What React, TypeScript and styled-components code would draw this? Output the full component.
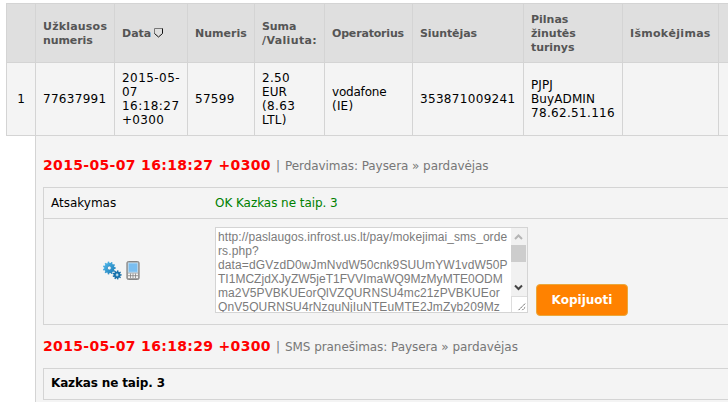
import React from 'react';
import styled, { createGlobalStyle } from 'styled-components';

const LINE = '#d4d4d4';
const SURFACE = '#f4f4f4';

const GlobalStyle = createGlobalStyle`
  * { box-sizing: border-box; }
  body {
    margin: 0;
    background: #fff;
    color: #000;
    font: 12px/14px Verdana, 'DejaVu Sans', sans-serif;
    overflow: hidden;
  }
`;

const Page = styled.main`
  width: 728px;
  height: 402px;
  padding: 3px 0 0 6px;
  overflow: hidden;
`;

const Grid = styled.div`
  display: grid;
  grid-template-columns: 29px 79px 73px 67px 70px 88px 111px 99px 96px 1fr;
  grid-template-rows: 59px 73px;
  border-top: 1px solid ${LINE};
`;

const Cell = styled.div<{ $head?: boolean; $center?: boolean }>`
  display: flex;
  flex-direction: column;
  justify-content: center;
  align-items: ${p => (p.$center ? 'center' : 'flex-start')};
  padding: ${p => (p.$head ? 2 : 0)}px 0 0 ${p => (p.$center ? 0 : 7)}px;
  border-left: 1px solid ${LINE};
  border-bottom: 1px solid ${LINE};
  background: ${p => (p.$head ? '#dfdfdf' : SURFACE)};
  color: ${p => (p.$head ? '#555' : '#000')};
  font-size: ${p => (p.$head ? 11 : 12)}px;
  font-weight: ${p => (p.$head ? 700 : 400)};
`;

const Line = styled.span<{ $track?: number }>`
  display: flex;
  align-items: center;
  gap: 3px;
  height: 14px;
  white-space: pre;
  letter-spacing: ${p => p.$track ?? 0}px;
`;

const SortMark = styled.svg`
  display: block;
  width: 10px;
  height: 10px;
  margin-bottom: 2px;
`;

const Details = styled.section`
  height: 268px;
  margin-left: 29px;
  padding-left: 7px;
  border-left: 1px solid ${LINE};
  background: ${SURFACE};
`;

const Heading = styled.header<{ $height: number; $top: number }>`
  display: flex;
  align-items: baseline;
  height: ${p => p.$height}px;
  padding-top: ${p => p.$top}px;
  color: #777;
  line-height: 18px;
  white-space: pre;
`;

const Stamp = styled.strong`
  width: 233px;
  color: #f00;
  font-size: 14px;
  letter-spacing: 0.33px;
`;

const Bar = styled.span`
  width: 9px;
`;

const Caption = styled.span`
  letter-spacing: -0.065px;
`;

const Box = styled.div`
  border: solid ${LINE};
  border-width: 1px 0 1px 1px;
`;

const AnswerRow = styled.div`
  display: grid;
  grid-template-columns: 164px 1fr;
  align-items: center;
  height: 31px;
  padding: 0 0 1px 7px;
  border-bottom: 1px solid ${LINE};
`;

const Answer = styled.span`
  color: #008000;
  letter-spacing: -0.05px;
`;

const CopyRow = styled.div`
  display: grid;
  grid-template-columns: 171px 313px 92px;
  height: 105px;
`;

const Icons = styled.div`
  display: flex;
  gap: 4px;
  padding: 42px 0 0 59px;
`;

const Area = styled.div`
  display: grid;
  grid-template-columns: 1fr 16px;
  height: 86px;
  margin-top: 8px;
  border: 1px solid ${LINE};
  background: #fff;
  overflow: hidden;
`;

const Url = styled.div`
  height: 84px;
  padding: 2px 0 0 2px;
  overflow: hidden;
  color: #7b7b7b;
  font: 12px/14px Arial, 'Liberation Sans', sans-serif;
`;

const Scroll = styled.div`
  display: flex;
  flex-direction: column;
  align-items: stretch;
`;

const Track = styled.div`
  display: flex;
  flex-direction: column;
  height: 68px;
  background: #f1f1f1;
`;

const Thumb = styled.div`
  height: 17px;
  margin-right: 1px;
  background: #cdcdcd;
`;

const Space = styled.div`
  flex: 1;
`;

const Grip = styled.svg`
  width: 16px;
  height: 16px;
  border-top: 1px solid #ddd;
  border-left: 1px solid #ddd;
`;

const CopyButton = styled.button`
  align-self: start;
  width: 92px;
  height: 32px;
  margin: 65px 0 0 8px;
  padding: 0 0 1px;
  border: 1px solid #eaa83c;
  border-radius: 4px;
  background: #ff8200;
  color: #fff;
  font: bold 12px/14px Verdana, 'DejaVu Sans', sans-serif;
`;

const Message = styled.div`
  height: 30px;
  padding: 7px 0 0 7px;
  font-weight: 700;
  letter-spacing: -0.14px;
`;

type Text = [string, number?];

const columns: Text[][] = [
  [],
  [['Užklausos', 0.2], ['numeris', -0.1]],
  [['Data']],
  [['Numeris']],
  [['Suma', -0.1], ['/Valiuta:', 0.37]],
  [['Operatorius', -0.18]],
  [['Siuntėjas', -0.1]],
  [['Pilnas'], ['žinutės', -0.05], ['turinys', -0.05]],
  [['Išmokėjimas', 0.3]],
  [],
];

const values: Text[][] = [
  [['1']],
  [['77637991', 0.3]],
  [['2015-05-', 0.45], ['07', 0.2], ['16:18:27', 0.45], ['+0300', 0.3]],
  [['57599', 0.3]],
  [['2.50', 0.3], ['EUR', 0.1], ['(8.63', 0.35], ['LTL)', 0.2]],
  [['vodafone', -0.2], ['(IE)', 0.2]],
  [['353871009241', 0.32]],
  [['PJPJ', 0.1], ['BuyADMIN', 0.1], ['78.62.51.116', 0.32]],
  [],
  [],
];

const urlLines: Text[] = [
  ['http://paslaugos.infrost.us.lt/pay/mokejimai_sms_orde', 0.07],
  ['rs.php?', 0.1],
  ['data=dGVzdD0wJmNvdW50cnk9SUUmYW1vdW50P', 0.12],
  ['TI1MCZjdXJyZW5jeT1FVVImaWQ9MzMyMTE0ODM', 0.02],
  ['ma2V5PVBKUEorQlVZQURNSU4mc21zPVBKUEor', 0.1],
  ['QnV5QURNSU4rNzguNjIuNTEuMTE2JmZyb209Mz', 0.12],
];

function teeth(cx: number, cy: number, outer: number, inner: number, count: number) {
  const points: string[] = [];
  for (let i = 0; i < count; i++) {
    [[-0.32, inner], [-0.2, outer], [0.2, outer], [0.32, inner]].forEach(([shift, r]) => {
      const a = ((i + shift) / count) * Math.PI * 2;
      points.push(`${(cx + Math.cos(a) * r).toFixed(2)},${(cy + Math.sin(a) * r).toFixed(2)}`);
    });
  }
  return points.join(' ');
}

function SortIcon() {
  return (
    <SortMark viewBox="0 0 10 10" fill="none">
      <path d="M.5 5.5v-5h8" stroke="#777" />
      <path d="M8.5.5v5L4.5 9l-4-3.5" stroke="#111" />
    </SortMark>
  );
}

function GearsIcon() {
  return (
    <svg width="19" height="19" viewBox="0 0 19 19">
      <defs>
        <linearGradient id="gear" x2="1" y2="1">
          <stop stopColor="#55bdee" />
          <stop offset="1" stopColor="#1878b4" />
        </linearGradient>
      </defs>
      <polygon points={teeth(6.3, 7, 6.4, 5.1, 11)} fill="url(#gear)" />
      <circle cx="6.3" cy="7" r="2" fill={SURFACE} stroke="#2586c0" strokeWidth=".7" />
      <polygon points={teeth(14.1, 13.9, 4.6, 3.4, 9)} fill="#176fa9" />
      <circle cx="14.1" cy="13.9" r="1.3" fill={SURFACE} stroke="#3797ca" strokeWidth=".6" />
    </svg>
  );
}

function PhoneIcon() {
  return (
    <svg width="14" height="19" viewBox="0 0 14 19">
      <rect x=".9" y=".5" width="12.2" height="18" rx="1.5" fill="#a2a2a2" stroke="#858585" />
      <rect x="2.3" y="2" width="9.4" height="9.2" fill="#7abef0" stroke="#c2e0f5" strokeWidth=".8" />
      <path d="M2 12.5h10v4.5H2z" fill="#f4f4f4" />
      <path d="M2 14.7h10M4.5 12.5V17M7 12.5V17M9.5 12.5V17" stroke="#777" strokeWidth=".7" />
    </svg>
  );
}

function Arrow({ down }: { down?: boolean }) {
  return (
    <svg width="16" height="17" viewBox="0 0 16 17" fill="none">
      <path d={down ? 'M4 6.5l3.5 3.5L11 6.5' : 'M4 11l3.5-3.5L11 11'} stroke={down ? '#444' : '#b5b5b5'} strokeWidth="2" />
    </svg>
  );
}

function Entry({ time, label, height, top }: { time: string; label: string; height: number; top: number }) {
  return (
    <Heading $height={height} $top={top}>
      <Stamp>{time}</Stamp>
      <Bar>|</Bar>
      <Caption>{label}</Caption>
    </Heading>
  );
}

export default function App() {
  return (
    <Page>
      <GlobalStyle />
      <Grid>
        {columns.map((lines, i) => (
          <Cell key={i} $head>
            {lines.map(([text, track]) => (
              <Line key={text} $track={track}>
                {text}
                {text === 'Data' && <SortIcon />}
              </Line>
            ))}
          </Cell>
        ))}
        {values.map((lines, i) => (
          <Cell key={i} $center={i === 0}>
            {lines.map(([text, track]) => <Line key={text} $track={track}>{text}</Line>)}
          </Cell>
        ))}
      </Grid>
      <Details>
        <Entry time="2015-05-07 16:18:27 +0300" label="Perdavimas: Paysera » pardavėjas" height={51} top={20} />
        <Box>
          <AnswerRow>
            <span>Atsakymas</span>
            <Answer>OK Kazkas ne taip. 3</Answer>
          </AnswerRow>
          <CopyRow>
            <Icons><GearsIcon /><PhoneIcon /></Icons>
            <Area>
              <Url>
                {urlLines.map(([text, track]) => <Line key={text} $track={track}>{text}</Line>)}
              </Url>
              <Scroll>
                <Track>
                  <Arrow />
                  <Thumb />
                  <Space />
                  <Arrow down />
                </Track>
                <Grip viewBox="0 0 16 16"><path d="M7 14L14 7M11 14l3-3" stroke="#555" strokeDasharray="2 .6" /></Grip>
              </Scroll>
            </Area>
            <CopyButton>Kopijuoti</CopyButton>
          </CopyRow>
        </Box>
        <Entry time="2015-05-07 16:18:29 +0300" label="SMS pranešimas: Paysera » pardavėjas" height={43} top={12} />
        <Box><Message>Kazkas ne taip. 3</Message></Box>
      </Details>
    </Page>
  );
}
